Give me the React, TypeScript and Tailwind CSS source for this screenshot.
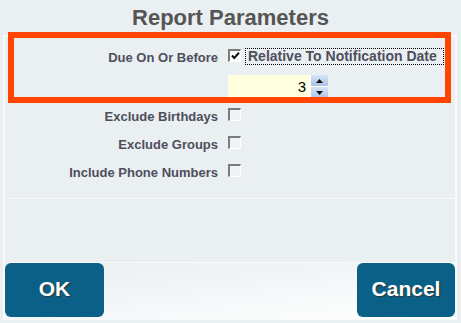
import React from 'react'

const font = { fontFamily: '"Liberation Sans", Arial, sans-serif' }

function Check({ checked = false }: { checked?: boolean }) {
  return (
    <div
      className={`w-[13px] h-[13px] shrink-0 border-t-2 border-l-2 border-b border-r border-t-[#7b7b7b] border-l-[#7b7b7b] border-b-white border-r-white flex items-center justify-center ${
        checked ? 'bg-white' : 'bg-[#f1f4f6]'
      }`}
    >
      {checked && (
        <svg width="9" height="8" viewBox="0 0 9 8">
          <path d="M1 3.5 L3.2 6 L8 0.8" fill="none" stroke="#111" strokeWidth="2" />
        </svg>
      )}
    </div>
  )
}

function Row({ label }: { label: string }) {
  return (
    <div className="flex items-start h-[28px]">
      <div className="w-[213px] text-right text-[13px] leading-[17px] font-bold text-[#4e4e5c] whitespace-nowrap">
        {label}
      </div>
      <div className="ml-[10px]">
        <Check />
      </div>
    </div>
  )
}

function Spinner() {
  return (
    <div className="w-[18px] h-[24px] flex flex-col border-l border-white">
      <div className="h-[12px] flex items-center justify-center bg-gradient-to-b from-[#d7e4f5] to-[#a9c3e6] border-b border-white">
        <svg width="7" height="4" viewBox="0 0 7 4">
          <path d="M3.5 0 L7 4 L0 4 Z" fill="#111" />
        </svg>
      </div>
      <div className="h-[12px] flex items-center justify-center bg-gradient-to-b from-[#d7e4f5] to-[#a9c3e6]">
        <svg width="7" height="4" viewBox="0 0 7 4">
          <path d="M0 0 L7 0 L3.5 4 Z" fill="#111" />
        </svg>
      </div>
    </div>
  )
}

export default function App() {
  return (
    <div className="relative w-[461px] h-[323px] bg-[#eaeff2] flex flex-col" style={font}>
      <div className="h-[35px] text-center text-[22px] leading-[35px] font-bold text-[#555]">
        Report Parameters
      </div>

      <div className="ml-[3px] w-[454px] border-x-2 border-[#f7f9fa] flex flex-col">
        <div className="h-[163px] border-t-2 border-[#f7f9fa] pt-[11px] flex flex-col">
          <div className="flex items-start h-[17px]">
            <div className="w-[213px] pt-[1px] text-right text-[13px] leading-[17px] font-bold text-[#4e4e5c] whitespace-nowrap">
              Due On Or Before
            </div>
            <div className="ml-[10px] mt-[1px]">
              <Check checked />
            </div>
            <div className="ml-[4px] w-[199px] h-[17px] border border-dotted border-black pl-[2px] text-[14px] leading-[15px] font-bold text-[#4e4e5c] whitespace-nowrap">
              Relative To Notification Date
            </div>
          </div>

          <div className="mt-[10px] ml-[223px] flex">
            <div className="w-[82px] h-[24px] bg-[#ffffe0] text-right pr-[4px] text-[15px] leading-[24px] font-medium text-black">
              3
            </div>
            <Spinner />
          </div>

          <div className="mt-[9px] flex flex-col">
            <Row label="Exclude Birthdays" />
            <Row label="Exclude Groups" />
            <Row label="Include Phone Numbers" />
          </div>
        </div>

        <div className="h-[64px] border-t border-[#f7f9fa]" />

        <div className="h-[58px] border-y border-[#f7f9fa] bg-gradient-to-br from-[#e9eef1] to-white flex items-start justify-between">
          <button className="w-[99px] h-[54px] rounded-[6px] bg-[#0b6087] text-white text-[21px] font-bold pb-[3px] [text-shadow:1px_1px_1px_#333]">
            OK
          </button>
          <button className="w-[98px] h-[54px] rounded-[6px] bg-[#0b6087] text-white text-[21px] font-bold pb-[3px] [text-shadow:1px_1px_1px_#333]">
            Cancel
          </button>
        </div>
      </div>

      <div className="absolute left-[8px] top-[32px] w-[443px] h-[71px] border-[6px] border-[#ff4500]" />
    </div>
  )
}
